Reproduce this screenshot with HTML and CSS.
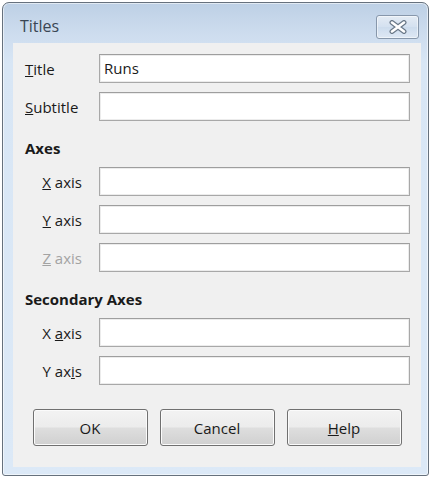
FILE: index.html
```html
<!DOCTYPE html>
<html>
<head>
<meta charset="utf-8">
<link rel="stylesheet" href="styles.css">
</head>
<body>
<div class="window">
  <div class="titlebar">
    <span class="caption">Titles</span>
    <div class="close">
      <svg width="18" height="14" viewBox="0 0 18 14">
        <path d="M3 2.5 L15 11.5 M15 2.5 L3 11.5" stroke="#6a7888" stroke-width="5" stroke-linecap="round" fill="none"/>
        <path d="M3 2.5 L15 11.5 M15 2.5 L3 11.5" stroke="#ffffff" stroke-width="2.6" stroke-linecap="round" fill="none"/>
      </svg>
    </div>
  </div>
  <div class="client">
    <div class="form">
      <label class="lbl"><u>T</u>itle</label>
      <div class="field">Runs</div>
      <label class="lbl"><u>S</u>ubtitle</label>
      <div class="field"></div>

      <div class="heading">Axes</div>
      <label class="lbl ind"><u>X</u> axis</label>
      <div class="field"></div>
      <label class="lbl ind"><u>Y</u> axis</label>
      <div class="field"></div>
      <label class="lbl ind disabled"><u>Z</u> axis</label>
      <div class="field"></div>

      <div class="heading">Secondary Axes</div>
      <label class="lbl ind">X <u>a</u>xis</label>
      <div class="field"></div>
      <label class="lbl ind">Y ax<u>i</u>s</label>
      <div class="field"></div>
    </div>
    <div class="buttons">
      <button class="btn">OK</button>
      <button class="btn">Cancel</button>
      <button class="btn"><u>H</u>elp</button>
    </div>
  </div>
</div>
</body>
</html>
```

FILE: styles.css
```css
html, body {
  margin: 0;
  padding: 0;
  background: #ffffff;
}
body {
  width: 432px;
  height: 479px;
  font-family: "Open Sans", "Noto Sans", sans-serif;
  font-size: 15px;
  color: #1a1a1a;
}
.window {
  margin: 2px 0 0 2px;
  width: 427px;
  height: 474px;
  box-sizing: border-box;
  border: 1px solid #66717d;
  border-radius: 7px 7px 3px 3px;
  background: linear-gradient(180deg, #bdd0e5 0px, #cddcee 30px, #d8e6f5 60px, #dce9f7 100%);
  padding: 0 7px 8px 10px;
  display: flex;
  flex-direction: column;
  box-shadow: inset 0 0 0 1px rgba(255,255,255,0.55);
}
.titlebar {
  height: 40px;
  display: flex;
  justify-content: space-between;
  align-items: flex-start;
}
.caption {
  margin-top: 13px;
  margin-left: 7px;
  font-size: 16px;
  color: #3a4653;
  line-height: 20px;
}
.close {
  margin-top: 12px;
  margin-right: 2px;
  width: 43px;
  height: 24px;
  box-sizing: border-box;
  border: 1px solid #8797ab;
  border-radius: 3px;
  background: linear-gradient(180deg, rgba(255,255,255,0.55), rgba(255,255,255,0.2) 50%, rgba(255,255,255,0.05) 51%, rgba(255,255,255,0.3));
  box-shadow: inset 0 0 0 1px rgba(255,255,255,0.5);
  display: flex;
  align-items: center;
  justify-content: center;
}
.client {
  flex: 1;
  background: #f0f0f0;
  padding: 11px 11px 0 12px;
  display: flex;
  flex-direction: column;
}
.form {
  display: grid;
  grid-template-columns: 74px 1fr;
  row-gap: 9px;
  align-items: center;
}
.lbl {
  line-height: 20px;
  color: #1a1a1a;
}
.lbl.ind {
  text-align: right;
  padding-right: 17px;
}
.lbl.disabled {
  color: #a3a3a3;
}
.field {
  height: 29px;
  box-sizing: border-box;
  background: #ffffff;
  border: 1px solid #a8a8a8;
  border-top-color: #9e9e9e;
  box-shadow: inset 0 0 0 1px #ececec;
  padding: 0 4px;
  line-height: 27px;
  color: #1a1a1a;
}
.heading {
  grid-column: 1 / 3;
  font-weight: bold;
  line-height: 20px;
  margin-top: 8px;
  color: #1a1a1a;
}
.buttons {
  margin-top: 24px;
  display: flex;
  justify-content: center;
  gap: 12px;
  padding-right: 1px;
}
.btn {
  width: 115px;
  height: 37px;
  box-sizing: border-box;
  border: 1px solid #707070;
  border-radius: 3px;
  background: linear-gradient(180deg, #f3f3f3 0%, #ececec 48%, #dedede 52%, #d0d0d0 100%);
  box-shadow: inset 0 0 0 1px #fbfbfb;
  font-family: "Open Sans", "Noto Sans", sans-serif;
  font-size: 15px;
  color: #1a1a1a;
  padding: 0;
}
```
